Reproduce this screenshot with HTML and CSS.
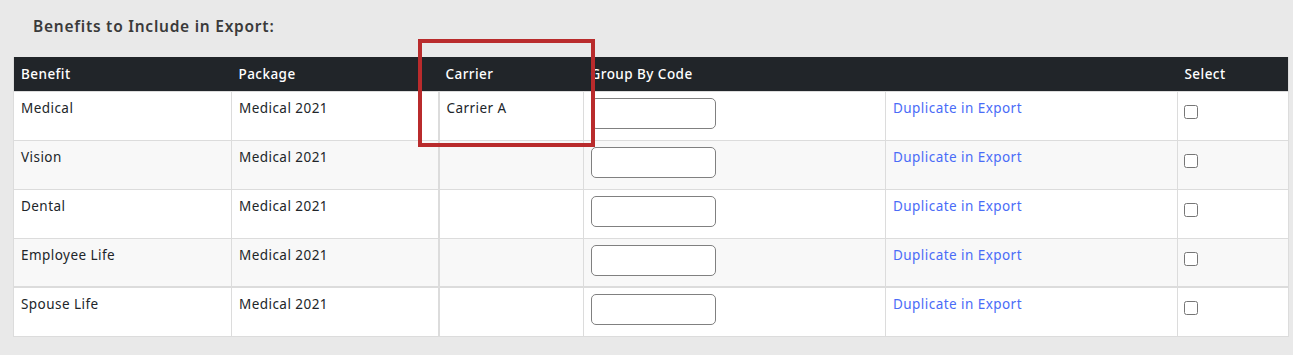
FILE: index.html
```html
<!DOCTYPE html>
<html lang="en">
<head>
  <meta charset="UTF-8" />
  <meta name="viewport" content="width=device-width, initial-scale=1.0"/>
  <title>Export Benefits</title>
  <link rel="stylesheet" href="styles.css">
</head>
<body>

  <div class="panel">
    <h4 class="title">Benefits to Include in Export:</h4>

    <div class="table-wrap">
      <table class="benefits">
        <thead>
          <tr>
            <th class="c-benefit">Benefit</th>
            <th class="c-package">Package</th>
            <th class="c-carrier">Carrier</th>
            <th class="c-code">Group By Code</th>
            <th class="c-dup"></th>
            <th class="c-select">Select</th>
          </tr>
        </thead>
        <tbody>
          <tr>
            <td>Medical</td>
            <td>Medical 2021</td>
            <td class="c-carrier">Carrier A</td>
            <td><input type="text" class="code"></td>
            <td><a href="#">Duplicate in Export</a></td>
            <td><input type="checkbox"></td>
          </tr>
          <tr>
            <td>Vision</td>
            <td>Medical 2021</td>
            <td class="c-carrier"></td>
            <td><input type="text" class="code"></td>
            <td><a href="#">Duplicate in Export</a></td>
            <td><input type="checkbox"></td>
          </tr>
          <tr>
            <td>Dental</td>
            <td>Medical 2021</td>
            <td class="c-carrier"></td>
            <td><input type="text" class="code"></td>
            <td><a href="#">Duplicate in Export</a></td>
            <td><input type="checkbox"></td>
          </tr>
          <tr>
            <td>Employee Life</td>
            <td>Medical 2021</td>
            <td class="c-carrier"></td>
            <td><input type="text" class="code"></td>
            <td><a href="#">Duplicate in Export</a></td>
            <td><input type="checkbox"></td>
          </tr>
        </tbody>
        <tbody class="second">
          <tr>
            <td>Spouse Life</td>
            <td>Medical 2021</td>
            <td class="c-carrier"></td>
            <td><input type="text" class="code"></td>
            <td><a href="#">Duplicate in Export</a></td>
            <td><input type="checkbox"></td>
          </tr>
        </tbody>
      </table>

      <!-- annotation box drawn over the carrier column -->
      <div class="highlight"></div>
    </div>
  </div>

</body>
</html>
```

FILE: styles.css
```css
body {
  margin: 0;
  background: #e9e9e9;
  font-family: "Noto Sans", Arial, sans-serif;
  color: #212529;
}

.panel {
  padding: 13px 5px 0 13px;
}

.title {
  margin: 0 0 18px 20px;
  font-size: 15.5px;
  font-weight: 600;
  color: #3a3a3a;
  letter-spacing: 0.75px;
  line-height: 26px;
}

.table-wrap {
  position: relative;
  width: 1276px;
}

.benefits {
  width: 100%;
  border-collapse: collapse;
  table-layout: fixed;
  font-size: 13.5px;
  letter-spacing: 0.45px;
  background: #fff;
  border: 1px solid #dcdcdc;
  border-top: none;
}

.benefits th {
  background: #212529;
  color: #fff;
  font-weight: 500;
  text-align: left;
  height: 34px;
  padding: 0 7px;
  box-sizing: border-box;
}

.benefits td {
  height: 49px;
  padding: 7px 7px 0;
  vertical-align: top;
  border: 1px solid #dcdcdc;
  box-sizing: border-box;
}

.benefits tbody tr:nth-child(even) td {
  background: #f8f8f8;
}

.benefits tbody.second {
  border-top: 2px solid #dcdcdc;
}

.c-benefit { width: 218px; }
.c-package { width: 207px; }
.c-carrier { width: 145px; }
.c-code { width: 302px; }
.c-dup { width: 292px; }
.c-select { width: auto; }

.benefits td.c-carrier {
  border-left: 2px solid #dcdcdc;
}

.benefits td:nth-child(4) {
  padding-top: 6px;
}

.code {
  width: 125px;
  height: 31px;
  box-sizing: border-box;
  border: 1px solid #808080;
  border-radius: 5px;
  background: #fff;
  margin: 0;
}

.benefits a {
  color: #4a6cf7;
  text-decoration: none;
}

.benefits input[type="checkbox"] {
  width: 14px;
  height: 14px;
  margin: 6px 0 0 -1px;
}

.highlight {
  position: absolute;
  left: 405px;
  top: -18px;
  width: 169px;
  height: 100px;
  border: 4px solid #b92b2c;
}
```
